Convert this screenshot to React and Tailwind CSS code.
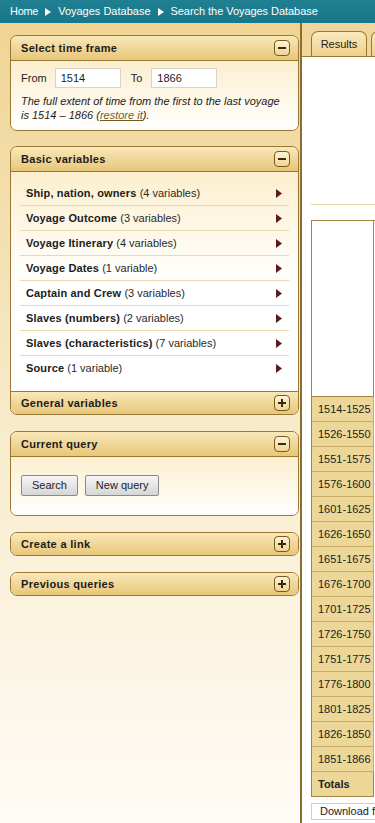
import React from "react";

function Toggle({ plus }) {
  return (
    <div className="w-[16px] h-[16px] rounded-[4px] border-[1.5px] border-[#7b5a1e] bg-linear-to-b from-[#fdf4da] to-[#efd592] flex items-center justify-center relative">
      <div className="w-[8px] h-[2px] bg-[#3b2a0e]" />
      {plus && <div className="absolute w-[2px] h-[8px] bg-[#3b2a0e]" />}
    </div>
  );
}

function Header({ title, plus, className = "" }) {
  return (
    <div
      className={
        "flex items-center justify-between pl-[10px] pr-[8px] bg-linear-to-b from-[#f9e8b8] to-[#e7c679] " +
        className
      }
    >
      <span className="text-[11px] font-bold tracking-[0.3px] text-[#1c1c1c]">{title}</span>
      <Toggle plus={plus} />
    </div>
  );
}

function Arrow() {
  return (
    <svg width="6" height="9" viewBox="0 0 6 9">
      <path d="M0 0 L6 4.5 L0 9 Z" fill="#5a1c1c" />
    </svg>
  );
}

function Crumb() {
  return (
    <svg width="6" height="8" viewBox="0 0 6 8" className="mx-[7px]">
      <path d="M0 0 L6 4 L0 8 Z" fill="#ffffff" />
    </svg>
  );
}

const rows = [
  ["Ship, nation, owners", "(4 variables)"],
  ["Voyage Outcome", "(3 variables)"],
  ["Voyage Itinerary", "(4 variables)"],
  ["Voyage Dates", "(1 variable)"],
  ["Captain and Crew", "(3 variables)"],
  ["Slaves (numbers)", "(2 variables)"],
  ["Slaves (characteristics)", "(7 variables)"],
  ["Source", "(1 variable)"],
];

const periods = [
  "1514-1525",
  "1526-1550",
  "1551-1575",
  "1576-1600",
  "1601-1625",
  "1626-1650",
  "1651-1675",
  "1676-1700",
  "1701-1725",
  "1726-1750",
  "1751-1775",
  "1776-1800",
  "1801-1825",
  "1826-1850",
  "1851-1866",
];

export default function App() {
  return (
    <div className="w-[375px] h-[823px] overflow-hidden flex flex-col font-['Liberation_Sans',Arial,sans-serif] text-[11px] text-[#1c1c1c]">
      {/* top bar */}
      <div className="h-[23px] shrink-0 bg-linear-to-b from-[#207f90] to-[#17788a] flex items-center pl-[10px] text-white text-[11px]">
        <span className="tracking-[-0.3px]">Home</span>
        <Crumb />
        <span>Voyages Database</span>
        <Crumb />
        <span className="whitespace-nowrap tracking-[-0.05px]">Search the Voyages Database</span>
      </div>

      <div className="flex flex-1 min-h-0">
        {/* left column */}
        <div className="w-[302px] shrink-0 border-r-[2px] border-[#8e6c2c] bg-linear-to-b from-[#efd493] via-[#f8ebcb] to-[#fffcf6] pl-[10px] pr-[1px] pt-[12px] flex flex-col">
          {/* time frame */}
          <div className="border border-[#9b7735] rounded-[7px] overflow-hidden">
            <Header title="Select time frame" className="h-[25px] border-b border-[#9b7735]" />
            <div className="bg-linear-to-b from-[#fcefce] to-[#ffffff] pl-[10px] pr-[10px] pt-[7px] pb-[8px]">
              <div className="flex items-center">
                <span>From</span>
                <div className="ml-[8px] w-[66px] h-[20px] bg-white border border-[#d8d4c8] flex items-center pl-[5px]">1514</div>
                <span className="ml-[10px]">To</span>
                <div className="ml-[9px] w-[66px] h-[20px] bg-white border border-[#d8d4c8] flex items-center pl-[5px]">1866</div>
              </div>
              <p className="italic leading-[14px] mt-[6px]">
                {"The full extent of time from the first to the last voyage is 1514 – 1866 ("}
                <span className="underline text-[#7a5a22]">restore it</span>
                {")."}
              </p>
            </div>
          </div>

          {/* basic variables */}
          <div className="mt-[15px] border border-[#9b7735] rounded-[7px] overflow-hidden">
            <Header title="Basic variables" className="h-[25px] border-b border-[#9b7735]" />
            <div className="bg-linear-to-b from-[#fcefce] via-[#ffffff] to-[#ffffff] pt-[9px] pb-[10px] px-[9px]">
              <div className="divide-y divide-[#ead9ad]">
                {rows.map(([b, n]) => (
                  <div key={b} className="h-[25px] flex items-center justify-between pl-[6px] pr-[7px]">
                    <span>
                      <span className="font-bold tracking-[0.15px]">{b}</span> <span className="text-[#2a2a2a]">{n}</span>
                    </span>
                    <Arrow />
                  </div>
                ))}
              </div>
            </div>
            <Header title="General variables" plus className="h-[23px] border-t border-[#9b7735]" />
          </div>

          {/* current query */}
          <div className="mt-[16px] border border-[#9b7735] rounded-[7px] overflow-hidden">
            <Header title="Current query" className="h-[25px] border-b border-[#9b7735]" />
            <div className="bg-linear-to-b from-[#fcefce] to-[#ffffff] h-[58px] pl-[10px] pt-[18px] flex items-start gap-[7px]">
              <div className="h-[21px] px-[10px] rounded-[2px] border border-[#8a8a8a] bg-linear-to-b from-[#f6f6f6] to-[#d6d6d6] flex items-center text-[#222]">Search</div>
              <div className="h-[21px] px-[10px] rounded-[2px] border border-[#8a8a8a] bg-linear-to-b from-[#f6f6f6] to-[#d6d6d6] flex items-center text-[#222]">New query</div>
            </div>
          </div>

          <div className="mt-[16px] border border-[#9b7735] rounded-[7px] overflow-hidden">
            <Header title="Create a link" plus className="h-[22px]" />
          </div>

          <div className="mt-[16px] border border-[#9b7735] rounded-[7px] overflow-hidden">
            <Header title="Previous queries" plus className="h-[22px]" />
          </div>
        </div>

        {/* right column */}
        <div className="flex-1 min-w-0 overflow-hidden flex flex-col">
          <div className="h-[34px] shrink-0 bg-[#f0d69b] border-b border-[#9b7735] flex items-end pl-[9px] gap-[4px] w-[500px]">
            <div className="h-[25px] w-[56px] rounded-t-[7px] border border-b-0 border-[#9b7735] bg-linear-to-b from-[#fbeabd] to-[#eed08b] flex items-center justify-center">
              Results
            </div>
            <div className="h-[25px] w-[60px] rounded-t-[7px] border border-b-0 border-[#9b7735] bg-linear-to-b from-[#fbeabd] to-[#eed08b]" />
          </div>
          <div className="flex-1 bg-white pl-[9px] w-[500px]">
            <div className="h-[148px] border-b border-[#e6d6ae]" />
            <div className="mt-[15px] w-[400px] border-l border-t border-[#a5843f]">
              <div className="w-[62px] h-[176px] bg-white border-r border-b border-[#a5843f]" />
              {periods.map((p) => (
                <div key={p} className="w-[62px] h-[25px] bg-[#ecd698] border-r border-b border-[#c9ac67] flex items-center pl-[6px] text-[#222]">
                  {p}
                </div>
              ))}
              <div className="w-[62px] h-[25px] bg-[#ecd698] border-r border-b border-[#a5843f] flex items-center pl-[6px] font-bold text-[#222]">
                Totals
              </div>
            </div>
            <div className="mt-[6px] h-[17px] w-[120px] border border-[#cfcfcf] bg-white flex items-center pl-[8px] whitespace-nowrap text-[#222]">
              Download full results
            </div>
          </div>
        </div>
      </div>
    </div>
  );
}
